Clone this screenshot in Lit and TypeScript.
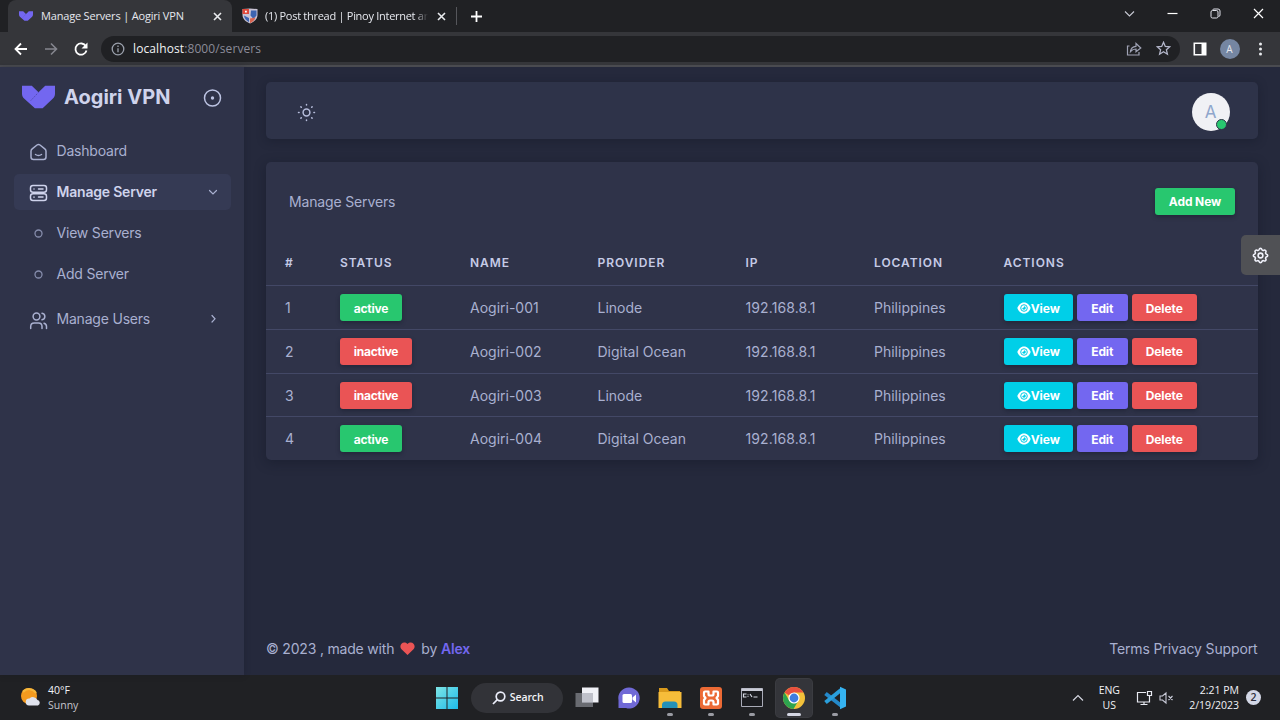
import { LitElement, html, css, svg } from 'lit';
import { customElement, property, state } from 'lit/decorators.js';
import { classMap } from 'lit/directives/class-map.js';

interface Server {
  id: number;
  active: boolean;
  name: string;
  provider: string;
  ip: string;
  location: string;
}

const SERVERS: Server[] = [
  { id: 1, active: true, name: 'Aogiri-001', provider: 'Linode', ip: '192.168.8.1', location: 'Philippines' },
  { id: 2, active: false, name: 'Aogiri-002', provider: 'Digital Ocean', ip: '192.168.8.1', location: 'Philippines' },
  { id: 3, active: false, name: 'Aogiri-003', provider: 'Linode', ip: '192.168.8.1', location: 'Philippines' },
  { id: 4, active: true, name: 'Aogiri-004', provider: 'Digital Ocean', ip: '192.168.8.1', location: 'Philippines' },
];

// 32x22 brand mark, used in the sidebar and as the tab favicon
const logoPaths = svg`
  <path fill="#7367f0" d="M0 0h9.500l6.500 6.500L22.500 0H32v7.500c0 2-.6 3.500-2 5L20 22h-7.500L2 12.500C.6 11.200 0 9.500 0 7.500z"/>
  <path stroke="#3f3a86" stroke-width=".8" stroke-dasharray="1.500 1" fill="none" opacity=".7" d="M8.500 14.500l7.500-8"/>
`;

@customElement('browser-bar')
export class BrowserBar extends LitElement {
  static styles = css`
    :host {
      display: block;
      height: 67px;
      box-sizing: border-box;
      background: #35363a;
      border-bottom: 2px solid #4a4b50;
      font-family: "Open Sans", "Noto Sans", sans-serif;
      font-size: 11px;
      color: #e6e8ee;
    }

    svg {
      display: block;
      flex: none;
    }

    .tabs {
      display: flex;
      align-items: center;
      height: 32px;
      padding-left: 8px;
      background: #202124;
    }

    .tab {
      display: flex;
      align-items: center;
      box-sizing: border-box;
      height: 32px;
      padding: 0 10px 0 11px;
      white-space: nowrap;
    }

    .tab.current {
      width: 224px;
      background: #35363a;
      border-radius: 8px 8px 0 0;
    }

    .tab.other {
      width: 224px;
      padding-left: 10px;
    }

    .tab .title {
      flex: 1;
      margin: 0 9px 2px 8px;
      letter-spacing: -0.18px;
    }

    .other .title {
      margin-left: 7px;
      letter-spacing: -0.280px;
      -webkit-mask-image: linear-gradient(90deg, #000 92%, transparent);
      mask-image: linear-gradient(90deg, #000 92%, transparent);
    }

    .divider {
      width: 1px;
      height: 18px;
      background: #55565b;
    }

    .plus {
      margin-left: 13px;
    }

    .window {
      display: flex;
      align-items: center;
      gap: 32px;
      margin-left: auto;
      padding: 0 16px 6px 0;
    }

    .toolbar {
      display: flex;
      align-items: center;
      height: 33px;
      padding: 0 17.500px 0 13px;
    }

    .nav {
      display: flex;
      gap: 14px;
      width: 88px;
    }

    .address {
      flex: 1;
      display: flex;
      align-items: center;
      height: 26px;
      margin-right: 13px;
      padding: 0 9px 0 10px;
      border-radius: 13px;
      background: #202124;
    }

    .url {
      flex: 1;
      margin-left: 8px;
      font-size: 12px;
      letter-spacing: 0.1px;
      color: #8b8c99;
    }

    .url b {
      font-weight: 400;
      color: #f1f3f4;
    }

    .star {
      margin-left: 14px;
    }

    .profile {
      display: flex;
      align-items: center;
      justify-content: center;
      width: 20px;
      height: 20px;
      margin: 0 18px 0 13px;
      border-radius: 50%;
      background: #7586a2;
      font-size: 10px;
    }
  `;

  private close() {
    return html`<svg width="9" height="9" viewBox="0 0 9 9" fill="none" stroke="#e8eaed" stroke-width="1.600"><path d="M1 1l7 7M8 1l-7 7"/></svg>`;
  }

  render() {
    return html`
      <div class="tabs">
        <div class="tab current">
          <svg width="14" height="10" viewBox="0 0 32 22">${logoPaths}</svg>
          <span class="title">Manage Servers | Aogiri VPN</span>
          ${this.close()}
        </div>
        <div class="tab other">
          <svg width="16" height="16" viewBox="0 0 16 16">
            <path fill="#c9c3d4" d="M.5 1L8 .5l7.500.5v6c0 4-3.500 7-7.500 8.500C4 14 .5 11 .5 7z"/>
            <path fill="#e04a3c" d="M.5 1H7v5H.5z"/>
            <path fill="#3d64b0" d="M9 2.500h5.500v5l-3 3.500-3-3.500zM2 7.500l5 2.500v4C4.500 12.800 2.300 11 2 7.500z"/>
            <path fill="#d9644f" d="M8 10.500l5.500-1c-1 2.800-3 4.600-5.500 5.800z"/>
            <path fill="#fff" d="M3 2.800h1.800v1.800H3z"/>
          </svg>
          <span class="title">(1) Post thread | Pinoy Internet ar</span>
          ${this.close()}
        </div>
        <div class="divider"></div>
        <svg class="plus" width="13" height="13" viewBox="0 0 13 13" stroke="#fff" stroke-width="1.800"><path d="M6.500 1v11M1 6.500h11"/></svg>
        <div class="window">
          <svg width="11" height="11" viewBox="0 0 11 11" fill="none" stroke="#c8cad4" stroke-width="1.100"><path d="M1 3.500l4.500 4.500L10 3.500"/></svg>
          <svg width="11" height="11" viewBox="0 0 11 11" stroke="#fff" stroke-width="1.200"><path d="M.5 5.500h10"/></svg>
          <svg width="11" height="11" viewBox="0 0 11 11" fill="none" stroke="#e0e2ea"><rect x="1" y="2.500" width="7" height="7.500" rx="1.500"/><path d="M3 2V1.500Q3 1 4 1h4q2 0 2 2v4q0 1.500-1.500 1.500"/></svg>
          <svg width="11" height="11" viewBox="0 0 11 11" stroke="#fff" stroke-width="1.200"><path d="M1 1l9 9M10 1l-9 9"/></svg>
        </div>
      </div>
      <div class="toolbar">
        <div class="nav">
          <svg width="16" height="16" viewBox="0 0 16 16" fill="none" stroke="#fff" stroke-width="1.800"><path d="M14 8H2.500M8 2.500L2.500 8 8 13.500"/></svg>
          <svg width="16" height="16" viewBox="0 0 16 16" fill="none" stroke="#85868e" stroke-width="1.600"><path d="M2 8h11.500M8 2.500L13.500 8 8 13.500"/></svg>
          <svg width="16" height="16" viewBox="0 0 16 16" fill="none" stroke="#fff" stroke-width="1.800"><path d="M12.900 5.200A5.600 5.600 0 1 0 13.500 9.500"/><path fill="#fff" stroke="none" d="M14.500 1.500v6h-6z"/></svg>
        </div>
        <div class="address">
          <svg width="14" height="14" viewBox="0 0 14 14" fill="none" stroke="#9aa0ac" stroke-width="1.300"><circle cx="7" cy="7" r="5.800"/><path d="M7 6.200v4M7 3.600v1.400"/></svg>
          <span class="url"><b>localhost</b>:8000/servers</span>
          <svg width="16" height="16" viewBox="0 0 16 16" fill="none" stroke="#9fa2b4" stroke-width="1.200"><path d="M3.500 5H1.500v9h11.500v-3"/><path d="M4.500 10.500C5 7 7 5.500 10 5.300V2.500L14.800 7 10 10.800V8C7.500 8 6 8.800 4.500 10.500z"/></svg>
          <svg class="star" width="15" height="15" viewBox="0 0 15 15" fill="none" stroke="#b4b7cb" stroke-width="1.300"><path d="M7.500 1.300l1.800 4.100 4.500.4-3.400 3 1 4.400-3.900-2.400-3.900 2.400 1-4.400-3.400-3 4.500-.4z"/></svg>
        </div>
        <svg width="14" height="14" viewBox="0 0 14 14"><path fill="none" stroke="#fff" stroke-width="1.600" d="M1.300 1.300h11.400v11.400H1.300z"/><path fill="#fff" d="M8.500 1H13v12H8.500z"/></svg>
        <div class="profile">A</div>
        <svg width="5" height="14" viewBox="0 0 5 14" fill="#e8eaed"><circle cx="2.500" cy="2" r="1.500"/><circle cx="2.500" cy="7" r="1.500"/><circle cx="2.500" cy="12" r="1.500"/></svg>
      </div>
    `;
  }
}

@customElement('side-menu')
export class SideMenu extends LitElement {
  @state() private open = true;

  static styles = css`
    :host {
      display: block;
      width: 244px;
      box-sizing: border-box;
      padding: 12px 13px 0 14px;
      background: #2f3349;
      color: #a9b0d0;
      font-size: 14px;
      letter-spacing: -0.2px;
      box-shadow: 0 0 6px rgba(15, 20, 34, 0.25);
      z-index: 1;
    }

    svg {
      display: block;
      flex: none;
    }

    .brand {
      display: flex;
      align-items: center;
      height: 36px;
      padding: 0 9px 0 8px;
    }

    .brand .name {
      flex: 1;
      margin-left: 9px;
      font-size: 20px;
      font-weight: 700;
      letter-spacing: 0;
      color: #cfd3ec;
    }

    ul {
      list-style: none;
      margin: 0;
      padding: 0;
    }

    .menu {
      margin-top: 18px;
    }

    .item {
      display: flex;
      align-items: center;
      box-sizing: border-box;
      height: 36px;
      padding: 0 12px 0 15px;
      margin-bottom: 5.300px;
      border-radius: 5px;
      cursor: pointer;
    }

    .item span {
      flex: 1;
      margin: 0 0 2px 8.500px;
    }

    .item > svg:first-child {
      margin-top: 2px;
    }

    .item.active {
      background: #353a54;
      color: #cfd3ec;
      font-weight: 600;
    }

    .item.child > svg:first-child {
      margin-top: 0;
    }

    .item.users {
      margin-top: 9px;
    }
  `;

  render() {
    return html`
      <div class="brand">
        <svg width="33" height="24" viewBox="0 0 32 22">${logoPaths}</svg>
        <span class="name">Aogiri VPN</span>
        <svg width="19" height="19" viewBox="0 0 19 19" fill="none" stroke="#bcc3e2" stroke-width="1.500"><circle cx="9.500" cy="10" r="8"/><circle cx="9.500" cy="10" r="1.700" fill="#bcc3e2" stroke="none"/></svg>
      </div>
      <ul class="menu">
        <li class="item">
          <svg width="19" height="18" viewBox="0 0 19 18" fill="none" stroke="currentColor" stroke-width="1.500" stroke-linecap="round" stroke-linejoin="round"><path d="M8 2L3.200 5.800Q2 6.800 2 8.200V14q0 2.500 2.500 2.500h10q2.500 0 2.500-2.500V8.200q0-1.400-1.200-2.400L11 2Q9.500.9 8 2z"/><path d="M6.500 11.500q3 2 6 0"/></svg>
          <span>Dashboard</span>
        </li>
        <li class="item active" @click="${() => { this.open = !this.open; }}">
          <svg width="19" height="18" viewBox="0 0 19 18" fill="none" stroke="currentColor" stroke-width="1.500" stroke-linecap="round"><rect x="1.500" y="1.500" width="16" height="6.800" rx="2.500"/><rect x="1.500" y="9.700" width="16" height="6.800" rx="2.500"/><path d="M5 4.900v.1M5 13.100v.1M9.500 4.900h4.500M9.500 13.100h4.500"/></svg>
          <span>Manage Server</span>
          <svg width="12" height="12" viewBox="0 0 12 12" fill="none" stroke="#a9b0d0" stroke-width="1.200" stroke-linecap="round"><path d="M2.500 4.500L6 8l3.500-3.500"/></svg>
        </li>
        ${this.open ? ['View Servers', 'Add Server'].map(label => html`
          <li class="item child">
            <svg width="19" height="10" viewBox="0 0 19 10" fill="none" stroke="#868dac" stroke-width="1.300"><circle cx="9.500" cy="4.500" r="3.500"/></svg>
            <span>${label}</span>
          </li>
        `) : ''}
        <li class="item users">
          <svg width="19" height="19" viewBox="0 0 19 19" fill="none" stroke="currentColor" stroke-width="1.500" stroke-linecap="round"><circle cx="7.500" cy="5.500" r="3.400"/><path d="M1.700 17.500v-2q0-3.500 3.500-3.500h4.300q3.500 0 3.500 3.500v2M13 2.300c3.800.6 3.800 5.800 0 6.500M17.500 17.500v-2q0-2.600-2.500-3.300"/></svg>
          <span>Manage Users</span>
          <svg width="12" height="12" viewBox="0 0 12 12" fill="none" stroke="currentColor" stroke-width="1.200" stroke-linecap="round"><path d="M5 1.500l3 3.300L5 8"/></svg>
        </li>
      </ul>
    `;
  }
}

@customElement('server-table')
export class ServerTable extends LitElement {
  @property({ attribute: false }) servers: Server[] = [];

  static styles = css`
    :host {
      display: block;
      border-radius: 5px;
      background: #2f3349;
      box-shadow: 0 3px 12px rgba(15, 20, 34, 0.4);
      color: #a9b0d0;
      font-size: 14px;
    }

    .head {
      display: flex;
      align-items: center;
      justify-content: space-between;
      height: 78px;
      padding: 0 22.500px 0 23px;
    }

    .caption {
      letter-spacing: -0.15px;
    }

    .row {
      display: grid;
      grid-template-columns: 55px 130px 127.500px 148px 128.500px 129.500px 1fr;
      align-items: center;
      box-sizing: border-box;
      height: 43.750px;
      padding-left: 19px;
      border-top: 1px solid #434866;
    }

    .row.titles {
      height: 45.200px;
      border: none;
      color: #c6cbe6;
      font-size: 12px;
      font-weight: 600;
      letter-spacing: 0.950px;
      text-transform: uppercase;
    }

    .row .ip {
      letter-spacing: 0.1px;
    }

    .actions {
      display: flex;
      gap: 4px;
    }

    button {
      display: inline-flex;
      align-items: center;
      justify-content: center;
      height: 27px;
      padding: 1px 0 0;
      border: none;
      border-radius: 3px;
      color: #fff;
      font: 700 12px Inter, "Liberation Sans", sans-serif;
      letter-spacing: -0.1px;
      box-shadow: 0 2px 4px rgba(15, 20, 34, 0.4);
      cursor: pointer;
    }

    .add { width: 80px; }
    .on { width: 62px; }
    .off { width: 72px; }
    .view { width: 69.500px; background: #00cfe8; }
    .edit { width: 50.500px; background: #7367f0; }
    .delete { width: 65.500px; }
    .add, .on { background: #28c76f; }
    .off, .delete { background: #ea5455; }
    .on, .off { letter-spacing: -0.250px; }
  `;

  render() {
    return html`
      <div class="head">
        <span class="caption">Manage Servers</span>
        <button class="add">Add New</button>
      </div>
      <div class="row titles">
        ${['#', 'Status', 'Name', 'Provider', 'IP', 'Location', 'Actions'].map(title => html`<span>${title}</span>`)}
      </div>
      ${this.servers.map(server => html`
        <div class="row">
          <span>${server.id}</span>
          <span><button class="${classMap({ on: server.active, off: !server.active })}">${server.active ? 'active' : 'inactive'}</button></span>
          <span>${server.name}</span>
          <span>${server.provider}</span>
          <span class="ip">${server.ip}</span>
          <span>${server.location}</span>
          <div class="actions">
            <button class="view">
              <svg width="14" height="12" viewBox="0 0 14 12"><path fill="#fff" d="M7 .5c3.300 0 5.600 2.500 6.700 5.500-1.100 3-3.400 5.500-6.700 5.500S1.400 9 .3 6C1.400 3 3.700.5 7 .5z"/><circle cx="7" cy="6" r="3.300" fill="none" stroke="#00cfe8"/><path fill="#00cfe8" d="M7 4.200A1.800 1.800 0 1 1 5.200 6 1.500 1.500 0 0 0 7 4.200z"/></svg>View
            </button>
            <button class="edit">Edit</button>
            <button class="delete">Delete</button>
          </div>
        </div>
      `)}
    `;
  }
}

@customElement('task-bar')
export class TaskBar extends LitElement {
  static styles = css`
    :host {
      display: grid;
      grid-template-columns: 424px 1fr 210px;
      height: 45px;
      background: #202124;
      font-family: "Open Sans", "Noto Sans", sans-serif;
      font-size: 10.500px;
      line-height: 15px;
      color: #f1f2f6;
    }

    svg {
      display: block;
      flex: none;
    }

    .weather {
      display: flex;
      align-items: center;
      gap: 7px;
      padding-left: 20px;
    }

    .weather .sky {
      color: #c4c5cc;
    }

    .apps {
      display: flex;
      align-items: center;
      padding-left: 4.500px;
    }

    .app {
      display: flex;
      flex-direction: column;
      align-items: center;
      box-sizing: border-box;
      width: 36px;
      height: 38px;
      padding-top: 7px;
      margin-right: 5.300px;
      border-radius: 4px;
    }

    .app.focused {
      background: #34353a;
      box-shadow: 0 0 0 1px #3b3c41;
    }

    .app::after {
      content: "";
      width: 6px;
      height: 3px;
      margin-top: 3px;
      border-radius: 2px;
    }

    .app.running::after {
      background: #9a9ba3;
    }

    .app.focused::after {
      width: 14px;
      background: #d5d7e4;
    }

    .search {
      display: flex;
      align-items: center;
      gap: 4px;
      box-sizing: border-box;
      width: 92px;
      height: 30px;
      margin: 0 6.500px 0 1px;
      padding-left: 21px;
      border-radius: 15px;
      background: #323338;
      font-weight: 600;
      letter-spacing: -0.1px;
    }

    .tray {
      display: flex;
      align-items: center;
      justify-content: flex-end;
      padding-right: 19px;
    }

    .lang {
      margin: 0 16px 0 15px;
      text-align: center;
    }

    .sound {
      margin-left: 6px;
    }

    .clock {
      width: 65px;
      margin-right: 7px;
      text-align: right;
      white-space: nowrap;
    }

    .count {
      width: 15px;
      height: 15px;
      border-radius: 50%;
      background: #d3d7e6;
      color: #2b2d3a;
      font-weight: 600;
      text-align: center;
    }
  `;

  render() {
    return html`
      <div class="weather">
        <svg width="21" height="21" viewBox="0 0 21 21"><circle cx="9" cy="9" r="8" fill="#f39a1f"/><path d="M3 5a8 8 0 0 1 13 1" fill="none" stroke="#f6b73c" stroke-width="2"/><path fill="#dfe2ec" d="M9 18.500a3.500 3.500 0 0 1 .5-7 5 5 0 0 1 8 1.500 2.900 2.900 0 0 1 .5 5.500z"/></svg>
        <div><div>40°F</div><div class="sky">Sunny</div></div>
      </div>
      <div class="apps">
        <div class="app">
          <svg width="24" height="24" viewBox="0 0 24 24">
            <defs><linearGradient id="win" x2="1" y2="1"><stop stop-color="#7ee5e5"/><stop offset="1" stop-color="#1dbbea"/></linearGradient></defs>
            <path fill="url(#win)" d="M1 1h10.500v10.500H1zM12.500 1H23v10.500H12.500zM1 12.500h10.500V23H1zM12.500 12.500H23V23H12.500z"/>
          </svg>
        </div>
        <div class="search">
          <svg width="14" height="14" viewBox="0 0 14 14" fill="none" stroke="#eceefa" stroke-width="1.700"><circle cx="8.500" cy="5.500" r="4.300"/><path d="M5.300 8.700L1 13"/></svg>
          Search
        </div>
        <div class="app">
          <svg width="24" height="24" viewBox="0 0 24 24"><path fill="#f0f1f6" d="M7 1.500h16.500v15H7z"/><path fill="#77787f" fill-opacity=".85" d="M.5 7H18v14H.5z"/><path fill="#bfc1ca" d="M7 7h11v9.500H7z"/></svg>
        </div>
        <div class="app">
          <svg width="24" height="24" viewBox="0 0 24 24"><path fill="#7069d6" d="M12 1.500a10.500 10.500 0 1 1-3 20.500H1.500v-8A10.500 10.500 0 0 1 12 1.500z"/><rect x="5.500" y="8" width="9.500" height="9" rx="1.500" fill="#fff"/><path fill="#fff" d="M15.500 11.500l3.500-3v8l-3.500-3z"/></svg>
        </div>
        <div class="app running">
          <svg width="24" height="24" viewBox="0 0 24 24"><path fill="#d99a1c" d="M1 2h8l2 3h11v4H1z"/><path fill="#f6bd3a" d="M.5 6h23v16H.5z"/><path fill="#2491b8" d="M4 22v-3q0-3.500 3.500-3.500h8.500q3.500 0 3.500 3.500v3z"/></svg>
        </div>
        <div class="app running">
          <svg width="24" height="24" viewBox="0 0 24 24"><rect x="1" y="1" width="22" height="22" rx="3" fill="#ec6a35"/><path d="M6 5.500h3.500v2.500q0 1.500 1.500 1.500h2q1.500 0 1.500-1.500V5.500H18q1 0 1 1v3.500L17.500 12l1.500 2v3.500q0 1-1 1h-3.500V16q0-1.500-1.500-1.500h-2q-1.500 0-1.500 1.500v2.500H6q-1 0-1-1V14l1.500-2L5 10V6.500q0-1 1-1z" fill="none" stroke="#fff" stroke-width="2.200" stroke-linejoin="round"/></svg>
        </div>
        <div class="app running">
          <svg width="24" height="24" viewBox="0 0 24 24"><path fill="#1b1c20" stroke="#a9abb8" d="M1.500 2.500h21v18h-21z"/><path fill="#c9cbd6" d="M1.500 2.500h21V5h-21z"/><path fill="none" stroke="#d7d9e4" stroke-width="1.200" d="M6.500 8h-3v3h3M8 8.500v.8M8 10.300v.8M10 8l2 3M13.500 11h4"/></svg>
        </div>
        <div class="app running focused">
          <svg width="24" height="24" viewBox="0 0 24 24">
            <circle cx="12" cy="12" r="11" fill="#f3c13a"/>
            <path fill="#e8503f" d="M2.500 6.500A11 11 0 0 1 21.500 6.500H12v6z"/>
            <path fill="#2da44f" d="M2.500 6.500A11 11 0 0 0 11.500 23L16.500 14.500 12 17.500 7.300 14.800z"/>
            <circle cx="12" cy="12" r="5.600" fill="#fff"/><circle cx="12" cy="12" r="4.400" fill="#3f7de0"/>
          </svg>
        </div>
        <div class="app running">
          <svg width="24" height="24" viewBox="0 0 24 24"><path fill="none" stroke="#2489ca" stroke-width="4" stroke-linejoin="round" d="M2.500 7.500l15.500 12"/><path fill="none" stroke="#2a9fdc" stroke-width="4" d="M2.500 16.500L18 4"/><path fill="#35b3f1" d="M17 .8l6 2.700v17L17 23.200z"/></svg>
        </div>
      </div>
      <div class="tray">
        <svg width="12" height="12" viewBox="0 0 12 12" fill="none" stroke="#d5d7e2" stroke-width="1.200"><path d="M1 8.500l5-5 5 5"/></svg>
        <div class="lang"><div>ENG</div><div>US</div></div>
        <svg width="17" height="16" viewBox="0 0 17 16" fill="none" stroke="#e8eaf2" stroke-width="1.200"><path d="M10 2.500H1.500v9.500h12V8.500M4.500 14.500h7M8 12v2.500M11.500 1.500h4v4h-4zM13.500 5.500v3.500"/></svg>
        <svg class="sound" width="15" height="14" viewBox="0 0 15 14" fill="none" stroke="#c9cbd8" stroke-width="1.100"><path d="M1 5h2.500L7 2v10L3.500 9H1zM9.500 5l4 4M13.500 5l-4 4"/></svg>
        <div class="clock"><div>2:21 PM</div><div>2/19/2023</div></div>
        <div class="count">2</div>
      </div>
    `;
  }
}

@customElement('app-root')
export class AppRoot extends LitElement {
  static styles = css`
    :host {
      display: flex;
      flex-direction: column;
      width: 1280px;
      height: 720px;
      overflow: hidden;
      background: #25293c;
      font-family: Inter, "Liberation Sans", sans-serif;
    }

    .page {
      flex: 1;
      display: flex;
      min-height: 0;
      position: relative;
    }

    main {
      flex: 1;
      display: flex;
      flex-direction: column;
      padding: 15px 22.500px 0 22px;
    }

    .navbar {
      display: flex;
      align-items: center;
      justify-content: space-between;
      height: 57px;
      margin-bottom: 23px;
      padding: 0 28px 0 31px;
      border-radius: 5px;
      background: #2e3349;
      box-shadow: 0 2px 10px rgba(15, 20, 34, 0.35);
    }

    .navbar svg {
      margin-top: 4px;
    }

    .avatar {
      display: flex;
      align-items: center;
      justify-content: center;
      position: relative;
      width: 38px;
      height: 38px;
      margin-top: 2px;
      border-radius: 50%;
      background: #f0f1f5;
      color: #8fa6cc;
      font-size: 17px;
    }

    .avatar::after {
      content: "";
      position: absolute;
      right: 3px;
      bottom: 1px;
      width: 9px;
      height: 9px;
      border: 1.500px solid #2f3349;
      border-radius: 50%;
      background: #28c76f;
    }

    footer {
      display: flex;
      align-items: center;
      justify-content: space-between;
      height: 54px;
      margin-top: auto;
      color: #a9b0d0;
      font-size: 14px;
      letter-spacing: -0.190px;
    }

    footer .made {
      display: flex;
      align-items: center;
    }

    .made svg {
      margin: 0 6px;
    }

    .made b {
      margin-left: 4px;
      font-weight: 600;
      color: #7367f0;
    }

    .links {
      letter-spacing: -0.130px;
    }

    .customize {
      display: flex;
      align-items: center;
      justify-content: center;
      position: absolute;
      top: 168px;
      right: 0;
      width: 39px;
      height: 40px;
      border-radius: 5px 0 0 5px;
      background: #505155;
    }
  `;

  render() {
    return html`
      <browser-bar></browser-bar>
      <div class="page">
        <side-menu></side-menu>
        <main>
          <div class="navbar">
            <svg width="19" height="19" viewBox="0 0 19 19" fill="none" stroke="#b6bddb" stroke-width="1.500" stroke-linecap="round"><circle cx="9.500" cy="9.500" r="3.400"/><path d="M9.500 1.500v.6M9.500 16.900v.6M1.500 9.500h.6M16.900 9.500h.6M3.900 3.900l.4.4M14.700 14.700l.4.4M3.900 15.100l.4-.4M14.700 4.300l.4-.4"/></svg>
            <div class="avatar">A</div>
          </div>
          <server-table .servers="${SERVERS}"></server-table>
          <footer>
            <div class="made">
              <span>© 2023 , made with</span>
              <svg width="15" height="13" viewBox="0 0 15 13"><path fill="#ea5455" d="M7.500 13L1.500 7.300C-1.800 3.800 2.800-2 7.500 1.900 12.200-2 16.800 3.800 13.500 7.300z"/></svg>
              <span>by</span><b>Alex</b>
            </div>
            <span class="links">Terms Privacy Support</span>
          </footer>
        </main>
        <div class="customize">
          <svg width="19" height="19" viewBox="0 0 24 24" fill="none" stroke="#f1f2fb" stroke-width="2" stroke-linejoin="round"><path d="M10.300 4.300c.4-1.800 3-1.800 3.400 0a1.700 1.700 0 0 0 2.600 1.100c1.500-.9 3.300.8 2.400 2.400a1.700 1.700 0 0 0 1 2.500c1.800.4 1.800 3 0 3.400a1.700 1.700 0 0 0-1 2.600c.9 1.500-.9 3.300-2.400 2.400a1.700 1.700 0 0 0-2.600 1c-.4 1.800-3 1.800-3.400 0a1.700 1.700 0 0 0-2.600-1c-1.500.9-3.300-.9-2.400-2.400a1.700 1.700 0 0 0-1-2.600c-1.800-.4-1.800-3 0-3.400a1.700 1.700 0 0 0 1-2.500c-.9-1.600.9-3.300 2.400-2.400 1 .6 2.300.1 2.600-1.100z"/><circle cx="12" cy="12" r="3"/></svg>
        </div>
      </div>
      <task-bar></task-bar>
    `;
  }
}

declare global {
  interface HTMLElementTagNameMap {
    'app-root': AppRoot;
    'browser-bar': BrowserBar;
    'side-menu': SideMenu;
    'server-table': ServerTable;
    'task-bar': TaskBar;
  }
}
